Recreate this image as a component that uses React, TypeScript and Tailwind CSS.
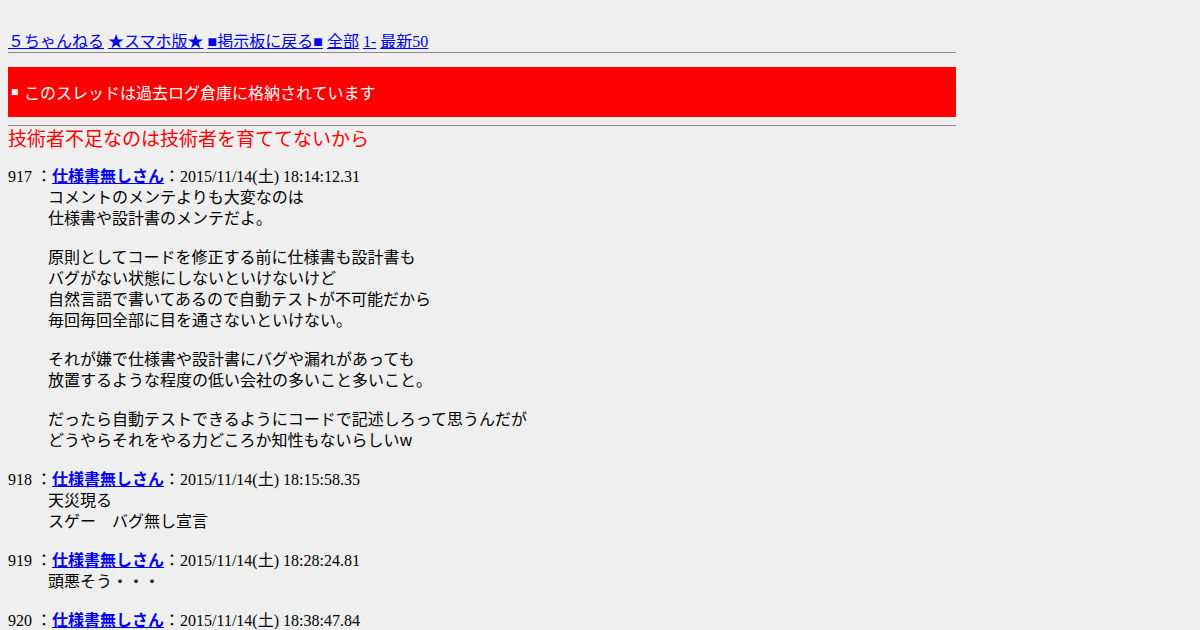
import React from "react";

const serif = "font-['Liberation_Serif','Noto_Sans_CJK_JP',serif]";
const sans = "font-['Noto_Sans_CJK_JP','Liberation_Sans',sans-serif]";

type Post = { no: number; date: string; body: string[] };

const posts: Post[] = [
  {
    no: 917,
    date: "2015/11/14(土) 18:14:12.31",
    body: [
      "コメントのメンテよりも大変なのは",
      "仕様書や設計書のメンテだよ。",
      "",
      "原則としてコードを修正する前に仕様書も設計書も",
      "バグがない状態にしないといけないけど",
      "自然言語で書いてあるので自動テストが不可能だから",
      "毎回毎回全部に目を通さないといけない。",
      "",
      "それが嫌で仕様書や設計書にバグや漏れがあっても",
      "放置するような程度の低い会社の多いこと多いこと。",
      "",
      "だったら自動テストできるようにコードで記述しろって思うんだが",
      "どうやらそれをやる力どころか知性もないらしいw",
    ],
  },
  {
    no: 918,
    date: "2015/11/14(土) 18:15:58.35",
    body: ["天災現る", "スゲー　バグ無し宣言"],
  },
  {
    no: 919,
    date: "2015/11/14(土) 18:28:24.81",
    body: ["頭悪そう・・・"],
  },
  {
    no: 920,
    date: "2015/11/14(土) 18:38:47.84",
    body: ["…"],
  },
];

export default function App() {
  return (
    <div className={`min-h-[630px] w-full bg-[#efefef] text-black text-[16px] ${serif}`}>
      <div className="ml-2 w-[948px] pt-[31px]">
        <div className="h-[21px] leading-[21px] whitespace-nowrap">
          <a className="text-[#0000ee] underline" href="#">５ちゃんねる</a>{" "}
          <a className="text-[#0000ee] underline" href="#">★スマホ版★</a>{" "}
          <a className="text-[#0000ee] underline" href="#">■掲示板に戻る■</a>{" "}
          <a className="text-[#0000ee] underline" href="#">全部</a>{" "}
          <a className="text-[#0000ee] underline" href="#">1-</a>{" "}
          <a className="text-[#0000ee] underline" href="#">最新50</a>
        </div>
        <div className="h-px bg-[#8a8a8a]" />
        <div className={`mt-[14px] h-[50px] bg-[#ff0000] text-white flex items-center pl-[3px] ${sans}`}>
          <span className="inline-block w-[13px] text-[12px] leading-[21px] font-['Liberation_Sans',sans-serif]">■</span>
          <span className="leading-[21px]">このスレッドは過去ログ倉庫に格納されています</span>
        </div>
        <div className="mt-[8px] h-px bg-[#8a8a8a]" />
        <h1 className={`text-[19px] leading-[24px] text-[#ff0000] font-normal ${sans}`}>
          技術者不足なのは技術者を育ててないから
        </h1>
        <div className="mt-[15px]">
          {posts.map((p) => (
            <div key={p.no}>
              <div className="h-[21px] leading-[21px] whitespace-nowrap">
                {p.no} ：
                <a className="text-[#0000ee] underline font-bold" href="#">
                  <span className={sans}>仕様書無しさん</span>
                </a>
                ：{p.date}
              </div>
              <div className={`ml-10 ${sans}`}>
                {p.body.map((line, i) =>
                  line === "" ? (
                    <div key={i} className="h-[18px]" />
                  ) : (
                    <div key={i} className="h-[21px] leading-[21px] whitespace-nowrap">
                      {line}
                    </div>
                  )
                )}
                <div className="h-[18px]" />
              </div>
            </div>
          ))}
        </div>
      </div>
    </div>
  );
}
